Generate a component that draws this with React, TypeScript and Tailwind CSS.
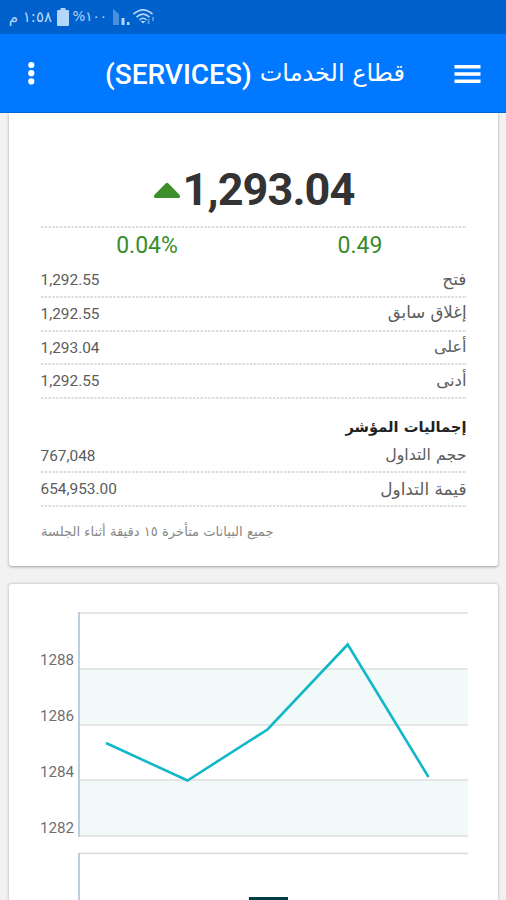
import React from "react";

interface DataRow {
  label: string;
  value: string;
  labelClass: string;
}

const prices: DataRow[] = [
  { label: "فتح", value: "1,292.55", labelClass: "text-[17px]" },
  { label: "إغلاق سابق", value: "1,292.55", labelClass: "text-[16.6px]" },
  { label: "أعلى", value: "1,293.04", labelClass: "text-[16px]" },
  { label: "أدنى", value: "1,292.55", labelClass: "text-[16.5px]" },
];

const totals: DataRow[] = [
  { label: "حجم التداول", value: "767,048", labelClass: "text-[15.8px]" },
  { label: "قيمة التداول", value: "654,953.00", labelClass: "text-[16.9px]" },
];

const arabic = "font-['DejaVu_Sans',sans-serif]";

const DottedLine = () => (
  <svg className="block h-[2px] w-full shrink-0" aria-hidden="true">
    <line x1="0" y1="1" x2="100%" y2="1" stroke="#d0d0d0" strokeWidth="1.3" strokeDasharray="2.4 1.4" />
  </svg>
);

const Row = ({ label, value, labelClass }: DataRow) => (
  <div className="flex h-[33.75px] flex-col">
    <div className="flex flex-1 items-center justify-between text-[#5c5c5c]">
      <span className="pt-[2px] text-[15.4px] leading-none" dir="ltr">{value}</span>
      <span className={`${arabic} ${labelClass} leading-none whitespace-nowrap`} dir="rtl">{label}</span>
    </div>
    <DottedLine />
  </div>
);

const StatusBar = () => (
  <div className="flex h-[34px] shrink-0 items-center bg-[#0060cc] pl-2 text-[#b5d6fb]">
    <span className={`${arabic} w-[44px] text-[15px] leading-none whitespace-nowrap`} dir="rtl">١:٥٨ م</span>
    <svg className="ml-[5px] h-[18px] w-[12px] shrink-0" viewBox="0 0 12 18" fill="currentColor">
      <path d="M3.5 0h5v2H11a1 1 0 0 1 1 1v14a1 1 0 0 1-1 1H1a1 1 0 0 1-1-1V3a1 1 0 0 1 1-1h2.500z" />
    </svg>
    <span className={`${arabic} ml-[5px] w-[33px] text-[13.5px] leading-none whitespace-nowrap`} dir="rtl">١٠٠%</span>
    <svg className="ml-[6px] h-[18px] w-[18px] shrink-0" viewBox="0 0 18 18" fill="currentColor">
      <path opacity=".4" d="M0 1 6 6v11H0z" />
      <path d="M8.500 10h3v7h-3zM14 14h2.500v3H14z" />
    </svg>
    <svg className="ml-[2px] h-[18px] w-[22px] shrink-0" viewBox="0 0 22 18" fill="none" stroke="currentColor" strokeWidth="1.600">
      <path d="M.5 6.200Q10 -2.500 19.500 6.200M3.500 9.200Q10 3 16.500 9.200M6.500 12Q10 8.500 13.500 12" />
      <path d="m7.500 13 2.500 2.500 2.500-2.500z" fill="currentColor" stroke="none" />
      <path opacity=".45" d="M15.500 11v5M20 9v4" strokeWidth="2" />
    </svg>
  </div>
);

const Header = () => (
  <header className="flex h-[79px] shrink-0 items-center border-b border-[#0068de] bg-[#0078ff] pr-[25px] pl-[27px] text-white">
    <svg className="h-6 w-2 shrink-0" viewBox="0 0 8 24" fill="currentColor">
      <circle cx="4.300" cy="4" r="3.100" />
      <circle cx="4.300" cy="12.200" r="3.100" />
      <circle cx="4.300" cy="20.400" r="3.100" />
    </svg>
    <h1 className="ml-[70px] flex w-[300px] items-center justify-between whitespace-nowrap" dir="ltr">
      <span className="mt-[4px] text-[28px] leading-none font-medium">(SERVICES)</span>
      <span className={`${arabic} text-[24px] leading-none`} dir="rtl">قطاع الخدمات</span>
    </h1>
    <svg className="mt-[2px] ml-auto h-[18px] w-[27px] shrink-0" viewBox="0 0 27 18" fill="currentColor">
      <path d="M.5 0h26v3.500H.500zM.5 7.200h26v3.500H.500zM.5 14.400h26v3.500H.500z" />
    </svg>
  </header>
);

const SummaryCard = () => (
  <section className="mr-[8px] ml-[9px] h-[453px] shrink-0 rounded-b-[3px] bg-white pt-[47px] pr-[31.5px] pl-[31.5px] shadow-[0_1px_3px_rgba(0,0,0,0.35)]">
    <div className="flex h-[65.500px] items-start justify-center pt-[7px]">
      <svg className="mt-[15px] mr-[2px] h-[16px] w-[28px] shrink-0" viewBox="0 0 28 17" fill="#3d8f2b" preserveAspectRatio="none">
        <path d="M12.600 1.500Q14 0 15.400 1.500L26.500 13.500Q28 17 25.500 17H2.500Q0 17 1.500 13.500z" />
      </svg>
      <span className="text-[45px] leading-none font-bold tracking-[-0.9px] text-[#333]">1,293.04</span>
    </div>
    <DottedLine />
    <div className="grid h-[36.500px] grid-cols-2 place-items-center text-[23px] leading-none text-[#388e2c]">
      <span>0.04%</span>
      <span>0.49</span>
    </div>
    {prices.map((row) => (
      <Row key={row.label} {...row} />
    ))}
    <h2 className={`${arabic} mt-[19px] h-[21.500px] text-[14.7px] leading-[18px] font-bold text-[#222]`} dir="rtl">
      إجماليات المؤشر
    </h2>
    {totals.map((row) => (
      <Row key={row.label} {...row} />
    ))}
    <p className={`${arabic} mt-[17px] w-[233px] text-[13.1px] leading-4 whitespace-nowrap text-[#888]`} dir="rtl">
      جميع البيانات متأخرة ١٥ دقيقة أثناء الجلسة
    </p>
  </section>
);

const ChartCard = () => (
  <section className="mr-[8px] ml-[9px] mt-[18px] h-[330px] shrink-0 rounded-t-[3px] bg-white px-[31px] pt-[28px] shadow-[0_0_3px_rgba(0,0,0,0.3)]">
    <svg className="block h-[300px] w-[430px]" viewBox="40 612 430 300">
      <path d="M79 669h389v56H79zM79 780h389v56H79z" fill="#f2f9f9" />
      <path d="M79 613h389M79 669h389M79 725h389M79 780h389M79 836h389M79 853.300h389" stroke="#dedede" strokeWidth="1.700" />
      <path d="M79 612v225M79 853v60" stroke="#b8c9df" strokeWidth="1.800" />
      <g fill="#707070" fontSize="15.200" fontFamily="Roboto, sans-serif">
        <text x="40" y="665.300">1288</text>
        <text x="40" y="721.300">1286</text>
        <text x="40" y="776.500">1284</text>
        <text x="40" y="832.500">1282</text>
      </g>
      <path d="M106 743 187.500 780.500 267.500 729.500 347.700 644.500 428.500 777" fill="none" stroke="#13b8c8" strokeWidth="2.600" />
      <path d="M249 897h39v20h-39z" fill="#003d45" />
    </svg>
  </section>
);

export default function App() {
  return (
    <div className="flex h-[900px] w-[506px] flex-col overflow-hidden bg-[#f2f2f2] font-[Roboto,sans-serif]">
      <StatusBar />
      <Header />
      <SummaryCard />
      <ChartCard />
    </div>
  );
}
